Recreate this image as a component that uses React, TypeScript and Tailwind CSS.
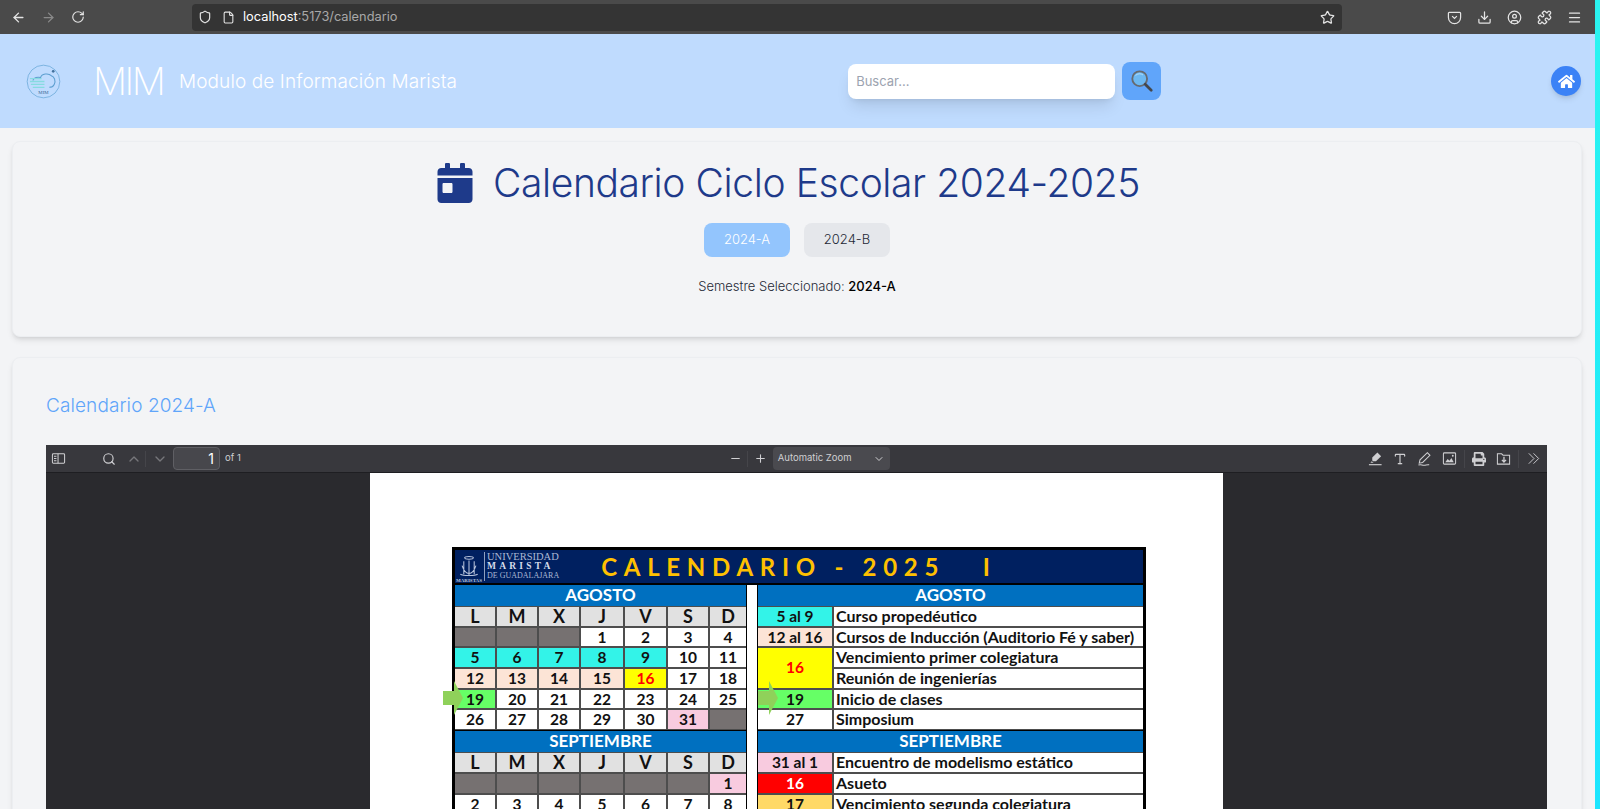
import React from "react";
import {
  ArrowLeft,
  ArrowRight,
  RotateCw,
  Shield,
  File,
  Star,
  Download,
  CircleUser,
  Puzzle,
  Menu,
  Search,
  ChevronUp,
  ChevronDown,
  Minus,
  Plus,
  Type,
} from "lucide-react";
import { FaCalendarDay, FaHome, FaPrint } from "react-icons/fa";

const EMPTY = "bg-[#767171]";
const CYAN = "bg-[#33f3e8]";
const PEACH = "bg-[#fce4d6]";
const GREEN = "bg-[#66ff66]";
const PINK = "bg-[#f8cbdf]";

type Cell = { t?: string; bg?: string; red?: boolean };

const augustDays: Cell[][] = [
  [{ bg: EMPTY }, { bg: EMPTY }, { bg: EMPTY }, { t: "1" }, { t: "2" }, { t: "3" }, { t: "4" }],
  [{ t: "5", bg: CYAN }, { t: "6", bg: CYAN }, { t: "7", bg: CYAN }, { t: "8", bg: CYAN }, { t: "9", bg: CYAN }, { t: "10" }, { t: "11" }],
  [{ t: "12", bg: PEACH }, { t: "13", bg: PEACH }, { t: "14", bg: PEACH }, { t: "15", bg: PEACH }, { t: "16", bg: "bg-[#ffff00]", red: true }, { t: "17" }, { t: "18" }],
  [{ t: "19", bg: GREEN }, { t: "20" }, { t: "21" }, { t: "22" }, { t: "23" }, { t: "24" }, { t: "25" }],
  [{ t: "26" }, { t: "27" }, { t: "28" }, { t: "29" }, { t: "30" }, { t: "31", bg: PINK }, { bg: EMPTY }],
];

const septemberDays: Cell[][] = [
  [{ bg: EMPTY }, { bg: EMPTY }, { bg: EMPTY }, { bg: EMPTY }, { bg: EMPTY }, { bg: EMPTY }, { t: "1", bg: PINK }],
  [{ t: "2" }, { t: "3" }, { t: "4" }, { t: "5" }, { t: "6" }, { t: "7" }, { t: "8" }],
];

const dayNames = ["L", "M", "X", "J", "V", "S", "D"];

const MonthBand = ({ name }: { name: string }) => (
  <div className="h-[21px] bg-[#0070c0] text-white text-[17px] leading-[20px] text-center">{name}</div>
);

const DayGrid = ({ rows }: { rows: Cell[][] }) => (
  <div className="grid grid-cols-[40px_40px_40px_42px_41px_40px_36px] auto-rows-[18.7px] gap-[2px] py-[1px] bg-[#4d4d4d]">
    {dayNames.map((d, i) => (
      <div key={i} className="bg-[#e1e1e1] text-[#111] text-[18px] leading-[19px] text-center">
        {d}
      </div>
    ))}
    {rows.flat().map((c, i) => (
      <div
        key={i}
        className={`${c.bg ?? "bg-white"} ${c.red ? "text-[#ff0000]" : "text-[#111]"} text-[15.5px] leading-[18.5px] text-center`}
      >
        {c.t}
      </div>
    ))}
  </div>
);

const EventRow = ({ date, bg, text, red }: { date: string; bg: string; text: string; red?: string }) => (
  <>
    <div className={`${bg} ${red ?? "text-[#111]"} text-[15.5px] leading-[18.5px] text-center`}>{date}</div>
    <div className="bg-white text-[#111] text-[16px] leading-[18px] pl-[2px] whitespace-nowrap">{text}</div>
  </>
);

const PdfCalendar = () => (
  <div className="relative w-[694px] mt-[73px] ml-[82px] border-[3px] border-black bg-black font-['Lato',sans-serif] font-bold">
    <div className="h-[33px] mb-[2px] bg-[#002060] flex items-center overflow-hidden">
      <div className="w-[28px] h-[32px] shrink-0 text-[5px] text-[#b8c4dc] flex flex-col items-center justify-end">
        <svg viewBox="0 0 30 26" className="w-[26px] h-[23px]" fill="none" stroke="#b8c4dc" strokeWidth="1.2">
          <ellipse cx="15" cy="3" rx="5" ry="1.6" />
          <path d="M9 7v15M15 6v17M21 7v15M7 12c2 6 5 9 8 9s6-3 8-9M5 22c3 2 17 2 20 0" />
        </svg>
        <span className="font-['Liberation_Serif',serif] leading-none">MARISTAS</span>
      </div>
      <div className="ml-[1px] pl-[2px] border-l border-[#8fa0c0] h-[29px] flex flex-col justify-center font-['Liberation_Serif',serif] font-normal text-[#aab8d4] leading-[9.5px] whitespace-nowrap">
        <span className="text-[10.5px]">UNIVERSIDAD</span>
        <span className="text-[9.5px] font-bold tracking-[3.2px] text-[#d5dcea]">MARISTA</span>
        <span className="text-[8px]">DE GUADALAJARA</span>
      </div>
      <div className="ml-[42px] text-[#ffc000] text-[24px] tracking-[6.7px] whitespace-pre">{"CALENDARIO - 2025   I"}</div>
    </div>
    <div className="flex bg-black">
      <div className="w-[291px] shrink-0">
        <MonthBand name="AGOSTO" />
        <DayGrid rows={augustDays} />
        <div className="h-[1px]" />
        <MonthBand name="SEPTIEMBRE" />
        <DayGrid rows={septemberDays} />
      </div>
      <div className="w-[10px] mx-[1px] shrink-0 bg-white" />
      <div className="flex-1 min-w-0">
        <MonthBand name="AGOSTO" />
        <div className="grid grid-cols-[74px_1fr] auto-rows-[18.7px] gap-[2px] py-[1px] bg-[#4d4d4d]">
          <EventRow date="5 al 9" bg={CYAN} text="Curso propedéutico" />
          <EventRow date="12 al 16" bg={PEACH} text="Cursos de Inducción (Auditorio Fé y saber)" />
          <div className="row-span-2 bg-[#ffff00] text-[#ff0000] text-[15.5px] flex items-center justify-center">16</div>
          <div className="bg-white text-[#111] text-[16px] leading-[18px] pl-[2px]">Vencimiento primer colegiatura</div>
          <div className="bg-white text-[#111] text-[16px] leading-[18px] pl-[2px]">Reunión de ingenierías</div>
          <EventRow date="19" bg={GREEN} text="Inicio de clases" />
          <EventRow date="27" bg="bg-white" text="Simposium" />
        </div>
        <div className="h-[1px]" />
        <MonthBand name="SEPTIEMBRE" />
        <div className="grid grid-cols-[74px_1fr] auto-rows-[18.7px] gap-[2px] py-[1px] bg-[#4d4d4d]">
          <EventRow date="31 al 1" bg={PINK} text="Encuentro de modelismo estático" />
          <EventRow date="16" bg="bg-[#ff0000]" red="text-white" text="Asueto" />
          <EventRow date="17" bg="bg-[#ffd966]" text="Vencimiento segunda colegiatura" />
        </div>
      </div>
    </div>
    {/* flechas verdes encima de la tabla */}
    <svg viewBox="0 0 20 34" className="absolute left-[-12px] top-[131px] w-[20px] h-[34px]">
      <polygon points="0,10 11,10 11,0 20,17 11,34 11,24 0,24" fill="#8fd15a" />
    </svg>
    <svg viewBox="0 0 20 34" className="absolute left-[303px] top-[131px] w-[20px] h-[34px]">
      <polygon points="0,10 11,10 11,0 20,17 11,34 11,24 0,24" fill="#8fd15a" />
    </svg>
  </div>
);

const BrowserBar = () => (
  <div className="h-[34px] shrink-0 bg-[#4a4a4a] flex items-center text-[#e4e4e4]">
    <div className="flex items-center gap-[15px] pl-[11px] w-[192px]">
      <ArrowLeft size={15} strokeWidth={2.2} />
      <ArrowRight size={15} className="text-[#8a8a8a]" />
      <RotateCw size={14} />
    </div>
    <div className="w-[1150px] h-[27px] rounded bg-[#343434] flex items-center pl-[6px] pr-[7px] text-[12.8px] font-['Inter',sans-serif]">
      <Shield size={14} />
      <File size={13} className="ml-[10px]" />
      <span className="ml-[8px] text-white">localhost</span>
      <span className="text-[#a8a8a8]">:5173/calendario</span>
      <Star size={15} className="ml-auto" />
    </div>
    <div className="flex items-center gap-[15px] ml-[105px]">
      <svg viewBox="0 0 16 16" className="w-[15px] h-[15px]" fill="none" stroke="currentColor" strokeWidth="1.3">
        <path d="M2.5 2.5h11a1 1 0 0 1 1 1V8a6.5 6.5 0 0 1-13 0V3.5a1 1 0 0 1 1-1z" />
        <path d="M5.5 6.5 8 9l2.5-2.5" />
      </svg>
      <Download size={15} />
      <CircleUser size={15} />
      <Puzzle size={15} />
      <Menu size={15} />
    </div>
  </div>
);

const MagnifierIcon = () => (
  <svg viewBox="0 0 26 26" className="w-[24px] h-[24px]">
    <circle cx="10.5" cy="10.5" r="8" fill="#6cb8f2" stroke="#666a70" strokeWidth="2" />
    <path d="M6 7c2-2.2 6-2.4 8-.6" stroke="#b9e0fa" strokeWidth="1" fill="none" />
    <path d="M16.5 16.5 23 23" stroke="#44474c" strokeWidth="3" strokeLinecap="round" />
  </svg>
);

const MimLogo = () => (
  <svg viewBox="0 0 36 36" className="w-[35px] h-[35px]" fill="none">
    <circle cx="18" cy="18" r="16.8" stroke="#6aa9d8" strokeWidth="0.8" />
    <path d="M7 17c1-3 5-4 8-3 1-4 8-5 11-2 3 1 5 5 3 9-1 2-3 3-5 3" stroke="#5d9fd0" strokeWidth="1.1" />
    <path d="M4 15h12M4 18h15M5 21h14M7 24h12" stroke="#86dbe0" strokeWidth="1.3" />
    <circle cx="28" cy="7.5" r="1.4" fill="#41709c" />
    <text x="18" y="31" textAnchor="middle" fontSize="5" fontFamily="Liberation Serif, serif" fill="#3b6a96">MIM</text>
  </svg>
);

const NavBar = () => (
  <header className="h-[94px] shrink-0 bg-[#bfdbfe] flex items-center text-white font-light">
    <div className="ml-[26px] w-[67px]">
      <MimLogo />
    </div>
    <span className="text-[38px] leading-none tracking-[-2.5px] font-extralight w-[86px]">MIM</span>
    <span className="text-[19px] leading-[26px] pt-[1px] tracking-[0.1px]">Modulo de Información Marista</span>
    <div className="ml-[391px] flex items-center gap-[7px]">
      <input
        placeholder="Buscar..."
        className="w-[267px] h-[35px] rounded-lg bg-white px-2 text-[13px] font-normal shadow-lg outline-none placeholder:text-[#9ca3af]"
      />
      <button className="w-[39px] h-[38px] rounded-lg bg-[#60a5fa] flex items-center justify-center">
        <MagnifierIcon />
      </button>
    </div>
    <button className="ml-[390px] w-[30px] h-[30px] rounded-full bg-[#3b82f6] shadow-md flex items-center justify-center">
      <FaHome size={17} className="text-white" />
    </button>
  </header>
);

// iconos del visor de PDF
const SidebarIcon = () => (
  <svg viewBox="0 0 16 16" className="w-[15px] h-[15px] ml-[5px]" fill="none" stroke="currentColor" strokeWidth="1.1">
    <rect x="1.5" y="3" width="13" height="10" rx="1" />
    <path d="M7.5 3v10M3.2 5.5h2.6M3.2 8h2.6M3.2 10.5h2.6" />
  </svg>
);

const HighlightIcon = () => (
  <svg viewBox="0 0 16 16" className="w-[15px] h-[15px]" fill="currentColor">
    <path d="M10 1.5 14 5.5 8.5 11H5.5L4.5 10V7z" />
    <path d="M4 11 2.5 12.5H6z" />
    <rect x="1" y="14" width="13.5" height="1.2" />
  </svg>
);

const PenIcon = () => (
  <svg viewBox="0 0 16 16" className="w-[15px] h-[15px]" fill="none" stroke="currentColor" strokeWidth="1.1">
    <path d="M11 1.8 13.8 4.6 6 12.2l-3.6.8.8-3.6z" />
    <path d="M1.5 15c3-1.2 4 .6 6.5.2 2-.3 3-.8 5-.5" />
  </svg>
);

const ImageIcon = () => (
  <svg viewBox="0 0 16 16" className="w-[15px] h-[15px]" fill="none" stroke="currentColor" strokeWidth="1.1">
    <rect x="1.5" y="2" width="13" height="12" rx="1" />
    <path d="M3.5 12l2.5-3.5 2 2 2-3 2.5 4.5z" fill="currentColor" stroke="none" />
    <circle cx="11.5" cy="5" r="1" fill="currentColor" stroke="none" />
  </svg>
);

const SaveIcon = () => (
  <svg viewBox="0 0 16 16" className="w-[15px] h-[15px]" fill="none" stroke="currentColor" strokeWidth="1.1">
    <path d="M1.5 3h4.5l1.5 1.5h7V14h-13z" />
    <path d="M8.5 6v5.5M6.3 9.5l2.2 2.2 2.2-2.2" strokeWidth="1.4" />
  </svg>
);

const DoubleChevronIcon = () => (
  <svg viewBox="0 0 16 16" className="w-[15px] h-[15px]" fill="none" stroke="currentColor" strokeWidth="1">
    <path d="M3 2.5 8.5 8 3 13.5M8 2.5 13.5 8 8 13.5" />
  </svg>
);

const PdfToolbar = () => (
  <div className="h-[28px] bg-[#38383d] border-b border-[#1e1e22] flex items-center text-[#cfcfd2] font-['Inter',sans-serif] relative">
    <div className="flex items-center">
      <SidebarIcon />
      <Search size={14} className="ml-[36px]" />
      <ChevronUp size={16} className="ml-[10px] text-[#77777b]" />
      <div className="w-px h-[16px] mx-[3px] bg-[#45454a]" />
      <ChevronDown size={16} className="ml-[3px] text-[#77777b]" />
      <div className="ml-[5px] w-[47px] h-[23px] bg-[#47474c] border border-[#5f5f64] rounded-sm text-right pr-[5px] text-[14px] leading-[21px] text-white">1</div>
      <span className="ml-[5px] text-[9.5px]">of 1</span>
    </div>
    <div className="flex items-center ml-[488px]">
      <Minus size={13} />
      <div className="w-px h-[16px] mx-[5px] bg-[#45454a]" />
      <Plus size={13} className="ml-[1px]" />
      <div className="ml-[6px] w-[117px] h-[23px] bg-[#4a4a4f] rounded-sm flex items-center justify-between pl-[5px] pr-[5px] text-[9.5px]">
        Automatic Zoom
        <ChevronDown size={12} />
      </div>
    </div>
    <div className="flex items-center ml-auto pr-[6px]">
      <HighlightIcon />
      <Type size={14} className="ml-[10px]" />
      <div className="ml-[10px]"><PenIcon /></div>
      <div className="ml-[10px]"><ImageIcon /></div>
      <div className="w-px h-[18px] mx-[7px] bg-[#45454a]" />
      <FaPrint size={14} />
      <div className="ml-[10px]"><SaveIcon /></div>
      <div className="w-px h-[18px] mx-[7px] bg-[#45454a]" />
      <DoubleChevronIcon />
    </div>
  </div>
);

export default function App() {
  return (
    <div className="h-[809px] w-full overflow-hidden flex bg-[#f3f4f6] font-['Inter',sans-serif]">
      <div className="w-[1595px] shrink-0 flex flex-col overflow-hidden">
        <BrowserBar />
        <NavBar />
        <main className="pl-[12px] pr-[13px] pt-[13px]">
          <section className="h-[196px] rounded-lg bg-[#f3f4f6] border border-[#eceef1] shadow-md flex flex-col items-center">
            <h1 className="mt-[18px] pr-[19px] flex items-center gap-[18px] text-[39px] leading-[46px] tracking-[-0.4px] font-light text-[#1e3a8a]">
              <FaCalendarDay size={40} />
              Calendario Ciclo Escolar 2024-2025
            </h1>
            <div className="mt-[17px] flex gap-[14px] text-[13px] font-light">
              <button className="w-[86px] h-[34px] rounded-lg bg-[#93c5fd] text-white">2024-A</button>
              <button className="w-[86px] h-[34px] rounded-lg bg-[#e5e7eb] text-[#1f2937]">2024-B</button>
            </div>
            <p className="mt-[19px] text-[13px] leading-[20px] font-light text-[#1f2937]">
              Semestre Seleccionado: <span className="font-medium text-black">2024-A</span>
            </p>
          </section>
          <section className="mt-[20px] h-[600px] rounded-lg bg-[#f3f4f6] border border-[#eceef1] shadow-md pl-[33px] pr-[34px] pt-[34px]">
            <h2 className="text-[19px] leading-[28px] tracking-[0.1px] font-light text-[#60a5fa]">Calendario 2024-A</h2>
            <div className="mt-[25px] h-[500px] bg-[#2a2a2e] overflow-hidden">
              <PdfToolbar />
              <div className="w-[853px] ml-[324px] h-full bg-white pt-[1px]">
                <PdfCalendar />
              </div>
            </div>
          </section>
        </main>
      </div>
      <div className="flex-1 bg-gradient-to-b from-[#2af4f0] to-[#1ce6ff]" />
    </div>
  );
}
